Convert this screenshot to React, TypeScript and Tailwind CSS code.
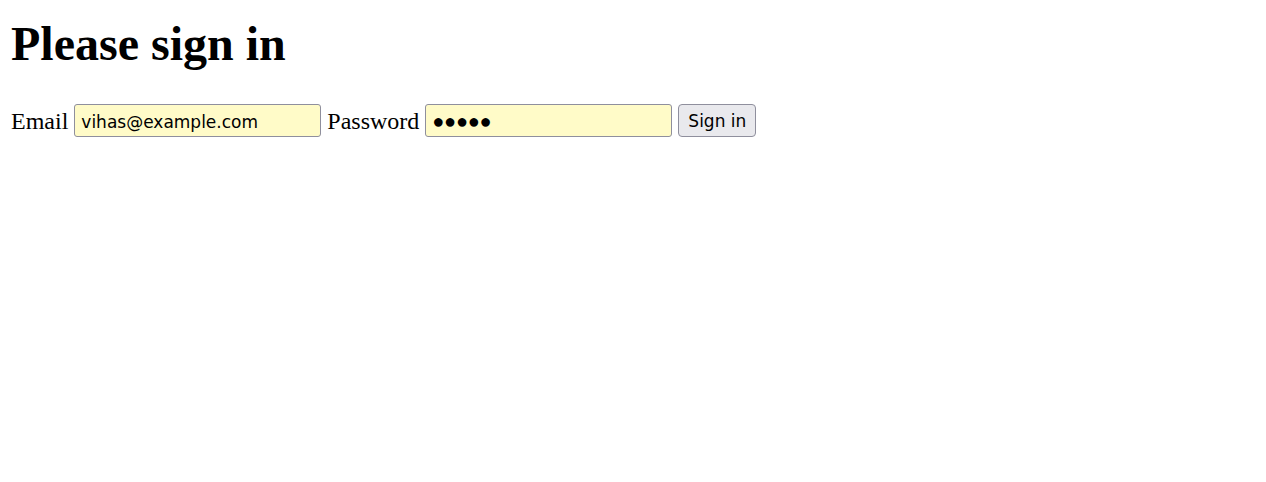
export default function App() {
  return (
    <div className="min-h-screen bg-white text-black pl-[11px] pt-[16px] font-['Liberation_Serif','Times_New_Roman',serif]">
      {/* Heading */}
      <h1 className="m-0 text-[48px] leading-[55px] font-bold">Please sign in</h1>

      {/* Sign-in form */}
      <form
        className="mt-[30px] flex items-center gap-[6px] text-[24px]"
        onSubmit={(e) => e.preventDefault()}
      >
        <label htmlFor="email" className="pt-[2px]">Email</label>
        <input
          id="email"
          type="text"
          readOnly
          value="vihas@example.com"
          className="w-[247px] h-[33px] px-[6px] pt-[3px] pb-0 bg-[#fffbc8] border border-[#8f8f9d] rounded-[3px] text-[17px] text-black font-['DejaVu_Sans',sans-serif] outline-none"
        />
        <label htmlFor="password" className="pt-[2px]">Password</label>
        <input
          id="password"
          type="text"
          readOnly
          value="●●●●●"
          className="w-[247px] h-[33px] px-[6px] pt-[3px] pb-0 bg-[#fffbc8] border border-[#8f8f9d] rounded-[3px] text-[20px] tracking-[-0.3px] text-black font-['Liberation_Sans',sans-serif] outline-none"
        />
        <button
          type="submit"
          className="h-[33px] px-[9px] pt-[3px] pb-0 bg-[#e9e9ed] border border-[#8f8f9d] rounded-[4px] text-[17px] text-black font-['DejaVu_Sans',sans-serif]"
        >
          Sign in
        </button>
      </form>
    </div>
  )
}
